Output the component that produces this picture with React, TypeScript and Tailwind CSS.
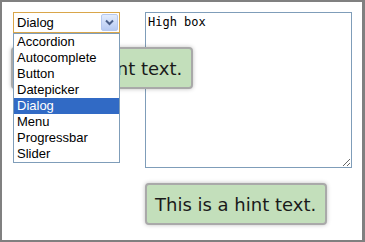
import React from 'react';

const items = ['Accordion', 'Autocomplete', 'Button', 'Datepicker', 'Dialog', 'Menu', 'Progressbar', 'Slider'];

function Hint({ className }: { className?: string }) {
  return (
    <div
      className={`w-[182px] h-[42px] flex items-center pl-[8px] rounded-[4px] border-2 border-[#a9a9a9] bg-[#c3dfbb] text-[18px] text-[#1a1a1a] shadow-[0_0_4px_rgba(0,0,0,0.25)] ${className ?? ''}`}
      style={{ fontFamily: '"DejaVu Sans", sans-serif' }}
    >
      This is a hint text.
    </div>
  );
}

export default function App() {
  return (
    <div className="relative w-[365px] h-[242px] bg-white border-l-2 border-t-2 border-r-[3px] border-b-2 border-[#808080] pl-[11px] pt-[10px]">
      {/* Top row: select + textarea */}
      <div className="flex items-start gap-[25px]">
        <div
          className="w-[107px] h-[21px] flex items-center justify-between border border-[#d9a64a] bg-white pl-[3px] pr-[1px] text-[13px] text-black"
          style={{ fontFamily: '"Liberation Sans", Arial, sans-serif' }}
        >
          <span>Dialog</span>
          <div className="w-[17px] h-[17px] rounded-[2px] border border-[#b6c8ee] bg-gradient-to-b from-[#e3ecfd] to-[#b7caf2] flex items-center justify-center">
            <svg width="9" height="7" viewBox="0 0 9 7">
              <path d="M1 1.5 L4.5 5 L8 1.5" fill="none" stroke="#4a5f8a" strokeWidth="2" />
            </svg>
          </div>
        </div>
        <textarea
          readOnly
          defaultValue="High box"
          className="w-[207px] h-[156px] border border-[#7f9db9] px-[2px] pt-[2px] text-[12px] leading-[15px] text-black outline-none"
          style={{ fontFamily: '"DejaVu Sans Mono", monospace' }}
        />
      </div>

      {/* Bottom hint */}
      <Hint className="mt-[15px] ml-[132px]" />

      {/* Hint tooltip shown over the textarea */}
      <div className="absolute left-[9px] top-[45px]">
        <Hint />
      </div>

      {/* Open dropdown list */}
      <ul
        className="absolute left-[11px] top-[31px] w-[107px] border border-[#7f9db9] bg-white text-[13px] text-black"
        style={{ fontFamily: '"Liberation Sans", Arial, sans-serif' }}
      >
        {items.map((item) => (
          <li
            key={item}
            className={`h-[16px] leading-[16px] pl-[3px] ${item === 'Dialog' ? 'bg-[#316ac5] text-white' : ''}`}
          >
            {item}
          </li>
        ))}
      </ul>
    </div>
  );
}
